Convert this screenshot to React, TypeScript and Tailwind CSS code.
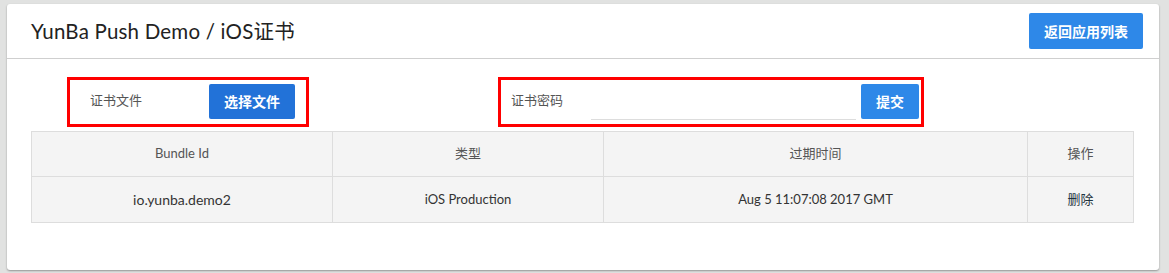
const font = { fontFamily: 'Lato, "Noto Sans CJK SC", sans-serif' }

const rows = [
  { bundle: 'io.yunba.demo2', type: 'iOS Production', expire: 'Aug 5 11:07:08 2017 GMT' },
]

export default function App() {
  return (
    <div className="h-[273px] bg-[#e1e2e1] pt-[4px] pl-[7px] pr-[10px]" style={font}>
      <div className="h-[266px] rounded-[3px] bg-white shadow-[0_1px_2px_rgba(0,0,0,0.35)]">
        <div className="flex h-[55px] items-center justify-between border-b border-[#cfcfcf] pl-[24px] pr-[16px]">
          <h1 className="text-[20.5px] text-[#222] tracking-[0.2px]">YunBa Push Demo / iOS证书</h1>
          <button className="h-[36px] w-[114px] rounded-[2px] bg-[#2e88e8] text-[14px] font-bold text-white">
            返回应用列表
          </button>
        </div>

        <div className="mt-[18px] flex h-[50px] pl-[60px]">
          <div className="flex w-[242px] items-start border-[3px] border-[#ff0000] pt-[4px] pl-[20px]">
            <span className="mt-[7px] w-[119px] text-[13px] text-[#555]">证书文件</span>
            <button className="h-[35px] w-[86px] rounded-[2px] bg-[#2272d8] text-[14px] font-bold text-white">
              选择文件
            </button>
          </div>
          <div className="ml-[189px] flex w-[426px] items-start border-[3px] border-[#ff0000] pt-[4px] pl-[10px]">
            <span className="mt-[7px] w-[80px] text-[13px] text-[#555]">证书密码</span>
            <input className="h-[36px] w-[265px] border-b border-[#ddd] outline-none" />
            <button className="ml-[5px] h-[35px] w-[58px] rounded-[2px] bg-[#2e88e8] text-[14px] font-bold text-white">
              提交
            </button>
          </div>
        </div>

        <div className="mx-[24px] mt-[4px]">
          <table className="w-[1103px] border-collapse bg-[#f4f4f4] text-center">
            <thead>
              <tr className="h-[45px] text-[13px] text-[#555]">
                <th className="w-[301px] border border-[#ddd] font-normal">Bundle Id</th>
                <th className="w-[271px] border border-[#ddd] font-normal">类型</th>
                <th className="w-[424px] border border-[#ddd] font-normal">过期时间</th>
                <th className="border border-[#ddd] font-normal">操作</th>
              </tr>
            </thead>
            <tbody>
              {rows.map((r) => (
                <tr key={r.bundle} className="h-[46px] text-[13px] text-[#333]">
                  <td className="border border-[#ddd] border-t-[#ccc] text-[14px]">{r.bundle}</td>
                  <td className="border border-[#ddd] border-t-[#ccc]">{r.type}</td>
                  <td className="border border-[#ddd] border-t-[#ccc]">{r.expire}</td>
                  <td className="border border-[#ddd] border-t-[#ccc]">
                    <a className="text-[#1f3440]">删除</a>
                  </td>
                </tr>
              ))}
            </tbody>
          </table>
        </div>
      </div>
    </div>
  )
}
